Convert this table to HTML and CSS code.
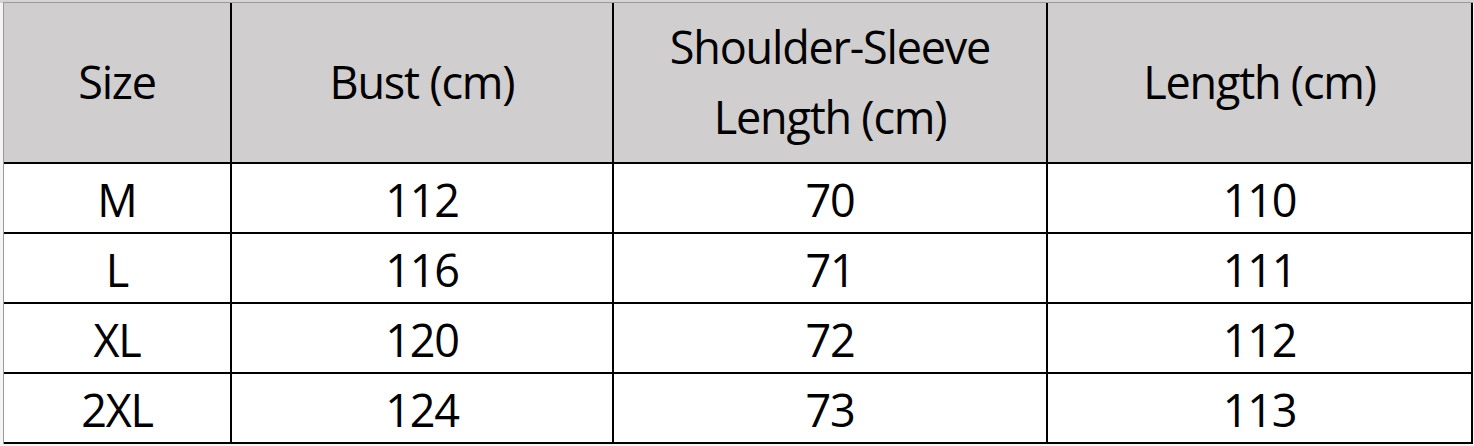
FILE: index.html
```html
<!DOCTYPE html>
<html>
<head>
<meta charset="utf-8">
<link rel="stylesheet" href="styles.css">
</head>
<body>
<div class="sheet">
  <div class="size-table">
    <div class="cell head">Size</div>
    <div class="cell head">Bust (cm)</div>
    <div class="cell head">Shoulder-Sleeve<br>Length (cm)</div>
    <div class="cell head">Length (cm)</div>

    <div class="cell">M</div>
    <div class="cell">112</div>
    <div class="cell">70</div>
    <div class="cell">110</div>

    <div class="cell">L</div>
    <div class="cell">116</div>
    <div class="cell">71</div>
    <div class="cell">111</div>

    <div class="cell">XL</div>
    <div class="cell">120</div>
    <div class="cell">72</div>
    <div class="cell">112</div>

    <div class="cell">2XL</div>
    <div class="cell">124</div>
    <div class="cell">73</div>
    <div class="cell">113</div>
  </div>
</div>
</body>
</html>
```

FILE: styles.css
```css
html, body {
  margin: 0;
  padding: 0;
  background: #ffffff;
}

.sheet {
  padding: 2px 0 0 3px;
  background: linear-gradient(#d6d4d4 0 3px, #f4f4f4 3px);
  width: 1474px;
  height: 446px;
  box-sizing: border-box;
}

.size-table {
  display: grid;
  grid-template-columns: 228px 382px 434px 425px;
  grid-template-rows: 161px 70px 70px 70px 70px;
  border-top: 1px solid #9a9a9a;
  border-left: 1px solid #9a9a9a;
  width: max-content;
  background: #ffffff;
  font-family: "Open Sans", "Noto Sans", sans-serif;
  font-size: 45px;
  font-weight: 450;
  letter-spacing: -1.2px;
  color: #000000;
}

.cell {
  display: flex;
  align-items: center;
  justify-content: center;
  text-align: center;
  box-sizing: border-box;
  border-right: 2px solid #000000;
  border-bottom: 2px solid #000000;
  padding-top: 2px;
}

.head {
  background: #d0cece;
  line-height: 70px;
  padding-top: 0;
  padding-bottom: 2px;
}
```
